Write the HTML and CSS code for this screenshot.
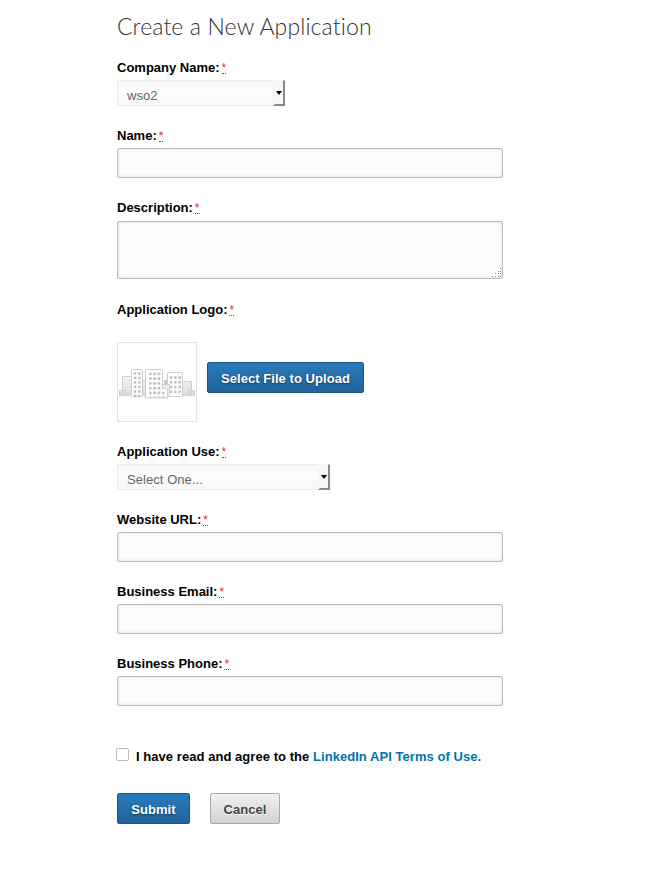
FILE: index.html
```html
<!DOCTYPE html>
<html lang="en">
<head>
<meta charset="utf-8">
<title>Create a New Application</title>
<link rel="stylesheet" href="styles.css">
</head>
<body>
<form class="app-form">
  <h1>Create a New Application</h1>
  <div class="field">
    <label for="company"><span>Company Name:</span><abbr>*</abbr></label>
    <div class="select company" id="company"><span class="value">wso2</span><span class="arrow"></span></div>
  </div>
  <div class="field">
    <label for="name"><span>Name:</span><abbr>*</abbr></label>
    <input class="text" id="name" type="text">
  </div>
  <div class="field description">
    <label for="desc"><span>Description:</span><abbr>*</abbr></label>
    <div class="area">
      <textarea class="text" id="desc"></textarea>
      <svg class="grip" width="10" height="10" shape-rendering="crispEdges" fill="#888"><path d="M8 0h1v1h-1zM6 3h1v1h-1zM8 3h1v1h-1zM3 5h1v1h-1zM6 5h1v1h-1zM8 5h1v1h-1zM0 8h1v1h-1zM3 8h1v1h-1zM6 8h1v1h-1zM8 8h1v1h-1z"/></svg>
    </div>
  </div>
  <div class="field logo-field">
    <label><span>Application Logo:</span><abbr>*</abbr></label>
    <div class="upload">
      <div class="logo">
        <svg width="78" height="78" viewBox="0 0 78 78">
          <defs>
            <linearGradient id="shade" x2="0" y2="1"><stop stop-color="#f4f4f4"/><stop offset="1" stop-color="#dcdcdc"/></linearGradient>
            <pattern id="win" width="4.3" height="4.5" patternUnits="userSpaceOnUse"><path d="M.3.3h2.500v2.300H.3z" fill="#b4b4b4"/></pattern>
            <pattern id="win-tall" width="4.3" height="4.8" patternUnits="userSpaceOnUse"><path d="M.3.3h2.500v2.300H.3z" fill="#b4b4b4"/></pattern>
          </defs>
          <g fill="url(#shade)" stroke="#d0d0d0">
            <path d="M1.500 47.500h6v5h-6zM70.500 47.500h6v5h-6zM4.500 33.500h9v19h-9zM64.500 38.500h9v14h-9zM24.500 37.500h3v15h-3z"/>
          </g>
          <path d="M46 37h4v4h-4z" fill="#c8c8c8"/>
          <g fill="#fff" stroke="#cdcdcd">
            <rect x="13.500" y="26.500" width="11" height="27" rx="1"/>
            <rect x="49.500" y="29.500" width="15" height="24" rx="1"/>
            <path d="M44.500 41.500h7v12h-7z" fill="#eee"/>
            <path d="M28.500 26.500h15q1 0 1 1v18h4q1 0 1 1v8.500H27.500v-27.500q0-1 1-1z"/>
          </g>
          <path transform="translate(15.500 29)" fill="url(#win)" d="M0 0h8v26H0z"/>
          <path transform="translate(30.800 29.300)" fill="url(#win-tall)" d="M0 0h12.500v25H0z"/>
          <path transform="translate(43.700 48.500)" fill="url(#win-tall)" d="M0 0h4v6H0z"/>
          <path transform="translate(51.500 33)" fill="url(#win-tall)" d="M0 0h12.500v19H0z"/>
        </svg>
      </div>
      <button type="button" class="btn primary choose">Select File to Upload</button>
    </div>
  </div>
  <div class="field">
    <label for="use"><span>Application Use:</span><abbr>*</abbr></label>
    <div class="select use" id="use"><span class="value">Select One...</span><span class="arrow"></span></div>
  </div>
  <div class="field">
    <label for="url"><span>Website URL:</span><abbr>*</abbr></label>
    <input class="text" id="url" type="text">
  </div>
  <div class="field">
    <label for="email"><span>Business Email:</span><abbr>*</abbr></label>
    <input class="text" id="email" type="text">
  </div>
  <div class="field">
    <label for="phone"><span>Business Phone:</span><abbr>*</abbr></label>
    <input class="text" id="phone" type="text">
  </div>
  <div class="terms"><input type="checkbox"><span>I have read and agree to the <a>LinkedIn API Terms of Use.</a></span></div>
  <div class="actions">
    <button type="button" class="btn primary submit">Submit</button>
    <button type="button" class="btn cancel">Cancel</button>
  </div>
</form>
</body>
</html>
```
FILE: styles.css
```css
* { box-sizing: border-box; }
body { margin: 0; background: #fff; font: 13px/18px "Liberation Sans", Arial, sans-serif; color: #000; }
.app-form { width: 386px; margin: 0 0 0 117px; padding-top: 11px; }
h1 { margin: 0 0 18px; font: 300 23px/30px Lato, sans-serif; letter-spacing: .12px; font-variant-ligatures: none; color: #333; white-space: nowrap; }
.field { margin-bottom: 21px; }
label { display: flex; height: 18px; margin-bottom: 3px; font-weight: bold; white-space: nowrap; }
abbr { height: 15px; margin-left: 2px; font-size: 12px; font-weight: normal; color: #dd2e1f; border-bottom: 1px dotted #dd2e1f; }
.text { display: block; width: 386px; height: 30px; margin: 0; padding: 4px 8px; border: 1px solid #bbb; border-radius: 2px; background: #fdfdfd; box-shadow: inset 0 0 4px rgba(0,0,0,.12); outline: 0; }
.description label { margin-bottom: 4px; }
.area { position: relative; }
textarea.text { height: 58px; resize: none; }
.description { margin-bottom: 22px; }
.grip { position: absolute; right: 1px; bottom: 1px; }
.select { display: flex; height: 26px; background: linear-gradient(#f6f6f6, #fdfdfd 40%, #f8f8f8); border: 1px solid #ececec; border-right: 0; border-radius: 2px; color: #666; }
.company { width: 168px; }
.use { width: 213px; }
.value { flex: 1; padding: 6px 0 0 9px; line-height: 18px; letter-spacing: .06px; }
.arrow { display: flex; width: 12px; height: 26px; margin-top: -1px; justify-content: center; padding: 10px 1px 0 0; background: #f7f7f7; border: 2px solid #888; border-top-color: #f7f7f7; border-left-color: #f7f7f7; border-top-width: 1px; }
.arrow::before { content: ""; height: 0; border: 3.5px solid transparent; border-top: 4px solid #000; border-bottom: 0; }
.logo-field label { margin-bottom: 23px; }
.upload { display: flex; align-items: flex-start; gap: 10px; }
.logo { width: 80px; height: 80px; border: 1px solid #e4e4e4; }
.logo svg { display: block; }
.btn { height: 31px; padding: 2px 0 0; border: 1px solid; border-radius: 2px; font: bold 13px/18px "Liberation Sans", Arial, sans-serif; letter-spacing: .05px; white-space: nowrap; }
.primary { color: #fff; border-color: #1c5584; background: linear-gradient(#287bbc, #23639a); text-shadow: 0 1px 2px rgba(0,0,0,.5); }
.choose { width: 157px; margin-top: 20px; }
.terms { display: flex; height: 20px; margin: 42px 0 25px -1px; font-weight: bold; letter-spacing: .05px; white-space: nowrap; }
.terms input { appearance: none; width: 13px; height: 13px; margin: 0 7px 0 0; border: 1px solid #bbb; border-radius: 2px; background: #fff; }
.terms a { color: #0073aa; }
.actions { display: flex; gap: 20px; }
.submit { width: 73px; }
.cancel { width: 70px; color: #444; border-color: #aaa; background: linear-gradient(#f0f0f0, #d2d2d2); text-shadow: 0 1px #fff; }
```
